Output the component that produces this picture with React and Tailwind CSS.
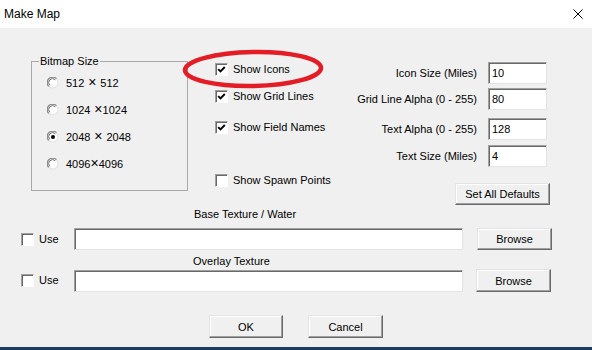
const Check = ({ checked }) => (
  <span className="flex h-[13px] w-[13px] shrink-0 items-center justify-center border border-t-[#a0a0a0] border-l-[#a0a0a0] border-b-white border-r-white bg-white shadow-[inset_1px_1px_0_#696969]">
    {checked && (
      <svg width="9" height="9" viewBox="0 0 9 9">
        <path d="M1.2 4.2 L3.5 6.5 L7.8 2" stroke="#000" strokeWidth="1.9" fill="none" />
      </svg>
    )}
  </span>
);

const Radio = ({ checked }) => (
  <svg width="12" height="12" viewBox="0 0 12 12" className="shrink-0">
    <circle cx="6" cy="6" r="5.5" fill="#fff" />
    <path d="M1.8 9.5 A5 5 0 0 1 9.5 1.8" stroke="#8a8a8a" strokeWidth="1.3" fill="none" />
    <path d="M2.8 8.3 A3.8 3.8 0 0 1 8.3 2.8" stroke="#5a5a5a" strokeWidth="0.9" fill="none" />
    <path d="M9.5 1.8 A5 5 0 0 1 1.8 9.5" stroke="#e3e3e3" strokeWidth="1.2" fill="none" />
    {checked && <circle cx="6" cy="6" r="2" fill="#000" />}
  </svg>
);

const Field = ({ value, className }) => (
  <div
    className={`border border-t-[#a0a0a0] border-l-[#a0a0a0] border-b-[#e3e3e3] border-r-[#e3e3e3] bg-white pl-[3px] leading-[20px] shadow-[inset_1px_1px_0_#696969] ${className}`}
  >
    {value}
  </div>
);

const Button = ({ children, className }) => (
  <button
    className={`flex items-center justify-center border border-t-[#e3e3e3] border-l-[#e3e3e3] border-b-[#696969] border-r-[#696969] bg-[#f0f0f0] leading-[14px] shadow-[inset_-1px_-1px_0_#a0a0a0,inset_1px_1px_0_#fff] ${className}`}
  >
    {children}
  </button>
);

const sizes = [
  { a: "512", x: " × ", b: "512" },
  { a: "1024", x: " ×", b: "1024", checked: false },
  { a: "2048", x: " × ", b: "2048", checked: true },
  { a: "4096", x: "×", b: "4096" },
];

const settings = [
  { label: "Icon Size (Miles)", value: "10", mt: "mt-0" },
  { label: "Grid Line Alpha (0 - 255)", value: "80", mt: "mt-[4px]" },
  { label: "Text Alpha (0 - 255)", value: "128", mt: "mt-[8px]" },
  { label: "Text Size (Miles)", value: "4", mt: "mt-[5px]" },
];

export default function App() {
  return (
    <div className="flex h-[350px] w-[592px] flex-col overflow-hidden font-['Liberation_Sans',Arial,sans-serif] text-[11px] text-black">
      {/* Title bar */}
      <div className="flex h-[28px] shrink-0 items-center justify-between bg-white pl-[4px] pr-[9px]">
        <span className="text-[12px]">Make Map</span>
        <svg width="10" height="10" viewBox="0 0 10 10">
          <path d="M0.5 0.5 L9.5 9.5 M9.5 0.5 L0.5 9.5" stroke="#000" strokeWidth="1" />
        </svg>
      </div>

      <div className="relative flex h-[319px] shrink-0 flex-col bg-[#f0f0f0]">
        {/* Top section */}
        <div className="flex pl-[31px] pt-[33px]">
          {/* Bitmap Size group */}
          <div className="relative h-[130px] w-[157px] shrink-0 border border-[#a8a8a8] pt-[7px] pl-[15px]">
            <span className="absolute -top-[8px] left-[7px] bg-[#f0f0f0] px-[1px] leading-[14px]">
              Bitmap Size
            </span>
            {sizes.map((s) => (
              <div key={s.a} className="flex h-[27px] items-center gap-[7px]">
                <Radio checked={s.checked} />
                <span className="whitespace-pre leading-[14px]">
                  {s.a}
                  <span className="text-[14px] leading-[14px]">{s.x}</span>
                  {s.b}
                </span>
              </div>
            ))}
          </div>

          {/* Checkboxes */}
          <div className="ml-[27px] flex flex-col">
            <label className="flex h-[16px] items-center gap-[5px]">
              <Check checked />
              Show Icons
            </label>
            <label className="mt-[11px] flex h-[16px] items-center gap-[5px]">
              <Check checked />
              Show Grid Lines
            </label>
            <label className="mt-[15px] flex h-[16px] items-center gap-[5px]">
              <Check checked />
              Show Field Names
            </label>
            <label className="mt-[37px] flex h-[16px] items-center gap-[5px]">
              <Check />
              Show Spawn Points
            </label>
          </div>

          {/* Numeric settings */}
          <div className="ml-auto mr-[45px] flex flex-col pt-[1px]">
            {settings.map((s) => (
              <div key={s.label} className={`flex items-center justify-end gap-[11px] ${s.mt}`}>
                <span className="leading-[14px]">{s.label}</span>
                <Field value={s.value} className="h-[22px] w-[59px]" />
              </div>
            ))}
            <Button className="-mr-[3px] mt-[16px] h-[22px] w-[95px] self-end">Set All Defaults</Button>
          </div>
        </div>

        {/* Texture rows */}
        <div className="flex flex-col pl-[21px]">
          <span className="ml-[173px] mt-[2px] leading-[14px]">Base Texture / Water</span>
          <div className="mt-[7px] flex items-center">
            <label className="flex w-[53px] items-center gap-[5px]">
              <Check />
              Use
            </label>
            <Field value="" className="h-[22px] w-[389px]" />
            <Button className="ml-[14px] h-[22px] w-[75px]">Browse</Button>
          </div>
          <span className="ml-[172px] mt-[4px] leading-[14px]">Overlay Texture</span>
          <div className="mt-[1px] flex items-center">
            <label className="flex w-[53px] items-center gap-[5px]">
              <Check />
              Use
            </label>
            <Field value="" className="h-[22px] w-[389px]" />
            <Button className="ml-[13px] h-[23px] w-[75px]">Browse</Button>
          </div>
        </div>

        {/* OK / Cancel */}
        <div className="mt-[23px] flex justify-center gap-[25px]">
          <Button className="h-[23px] w-[74px]">OK</Button>
          <Button className="h-[23px] w-[75px]">Cancel</Button>
        </div>

        {/* Red highlight drawn over the dialog */}
        <svg
          width="142"
          height="40"
          viewBox="0 0 142 40"
          className="pointer-events-none absolute left-[182px] top-[21px] -rotate-[1deg]"
        >
          <ellipse cx="71" cy="20" rx="68" ry="17" stroke="#e31c25" strokeWidth="4.5" fill="none" />
        </svg>
      </div>

      <div className="h-[3px] shrink-0 bg-[#1d3b5a]" />
    </div>
  );
}
